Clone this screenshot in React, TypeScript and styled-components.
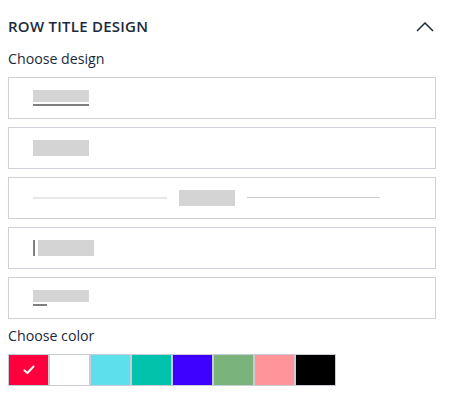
import React from "react";
import styled, { createGlobalStyle } from "styled-components";

const GlobalStyle = createGlobalStyle`
  html, body { margin: 0; padding: 0; background: #ffffff; }
  body { font-family: "Open Sans", "Noto Sans", Arial, sans-serif; color: #1b2a3b; }
`;

const Panel = styled.div`
  width: 428px;
  padding: 16px 0 0 8px;
  display: flex;
  flex-direction: column;
`;

const Header = styled.div`
  display: flex;
  align-items: center;
  justify-content: space-between;
  height: 20px;
  margin-bottom: 13px;
`;

const Title = styled.h2`
  margin: 0;
  font-size: 15px;
  line-height: 20px;
  font-weight: 600;
  letter-spacing: 0.25px;
  text-transform: uppercase;
  color: #1b2a3b;
`;

const Chevron = styled.svg`
  width: 18px;
  height: 10px;
  margin-right: 2px;
  margin-top: 1px;
`;

const Label = styled.div`
  font-size: 14.2px;
  line-height: 20px;
  font-weight: 500;
  color: #1b2a3b;
  margin-bottom: 8px;
`;

const DesignList = styled.div`
  display: flex;
  flex-direction: column;
  gap: 8px;
  margin-bottom: 7px;
`;

const DesignOption = styled.div`
  height: 40px;
  border: 1px solid #cdd1da;
  padding: 0 24px;
  display: flex;
  align-items: center;
  background: #fff;
`;

const Placeholder = styled.div<{ $h?: number }>`
  width: 56px;
  height: ${(p) => p.$h ?? 16}px;
  background: #d4d4d4;
  flex: none;
`;

const Stack = styled.div`
  display: flex;
  flex-direction: column;
  gap: 2px;
`;

const Underline = styled.div<{ $w: number }>`
  width: ${(p) => p.$w}px;
  height: 2px;
  background: #7f7f7f;
`;

const CenterRow = styled.div`
  width: 347px;
  display: flex;
  align-items: center;
  gap: 12px;
`;

const Rule = styled.div<{ $thick: number; $color: string }>`
  flex: 1;
  height: ${(p) => p.$thick}px;
  background: ${(p) => p.$color};
  margin-top: ${(p) => (p.$thick === 1 ? -2 : 0)}px;
`;

const BarRow = styled.div`
  display: flex;
  align-items: stretch;
  gap: 3px;
`;

const SideBar = styled.div`
  width: 2px;
  height: 16px;
  background: #7f7f7f;
`;

const Swatches = styled.div`
  display: flex;
`;

const Swatch = styled.button<{ $color: string }>`
  width: 41px;
  height: 32px;
  box-sizing: border-box;
  padding: 0;
  margin: 0;
  border: 1px solid #c8ccd6;
  background: ${(p) => p.$color};
  display: flex;
  align-items: center;
  justify-content: center;
  cursor: pointer;
`;

const colors = ["#ff003c", "#ffffff", "#5ee0ec", "#00c2ad", "#3e00ff", "#7ab47c", "#ff959a", "#000000"];

export default function App() {
  return (
    <>
      <GlobalStyle />
      <Panel>
        <Header>
          <Title>Row title design</Title>
          <Chevron viewBox="0 0 18 10" fill="none">
            <path d="M1 9 L9 1 L17 9" stroke="#1b2a3b" strokeWidth="1.5" />
          </Chevron>
        </Header>
        <Label>Choose design</Label>
        <DesignList>
          <DesignOption>
            <Stack>
              <Placeholder $h={12} />
              <Underline $w={56} />
            </Stack>
          </DesignOption>
          <DesignOption>
            <Placeholder />
          </DesignOption>
          <DesignOption>
            <CenterRow>
              <Rule $thick={2} $color="#e8e8e8" />
              <Placeholder />
              <Rule $thick={1} $color="#cccccc" />
            </CenterRow>
          </DesignOption>
          <DesignOption>
            <BarRow>
              <SideBar />
              <Placeholder />
            </BarRow>
          </DesignOption>
          <DesignOption>
            <Stack>
              <Placeholder $h={12} />
              <Underline $w={14} />
            </Stack>
          </DesignOption>
        </DesignList>
        <Label>Choose color</Label>
        <Swatches>
          {colors.map((c, i) => (
            <Swatch key={c} $color={c} aria-label={c}>
              {i === 0 && (
                <svg width="12" height="10" viewBox="0 0 12 10" fill="none">
                  <path d="M1.5 5.5 L4.5 8 L10.5 1.5" stroke="#ffffff" strokeWidth="2" strokeLinecap="round" strokeLinejoin="round" />
                </svg>
              )}
            </Swatch>
          ))}
        </Swatches>
      </Panel>
    </>
  );
}
